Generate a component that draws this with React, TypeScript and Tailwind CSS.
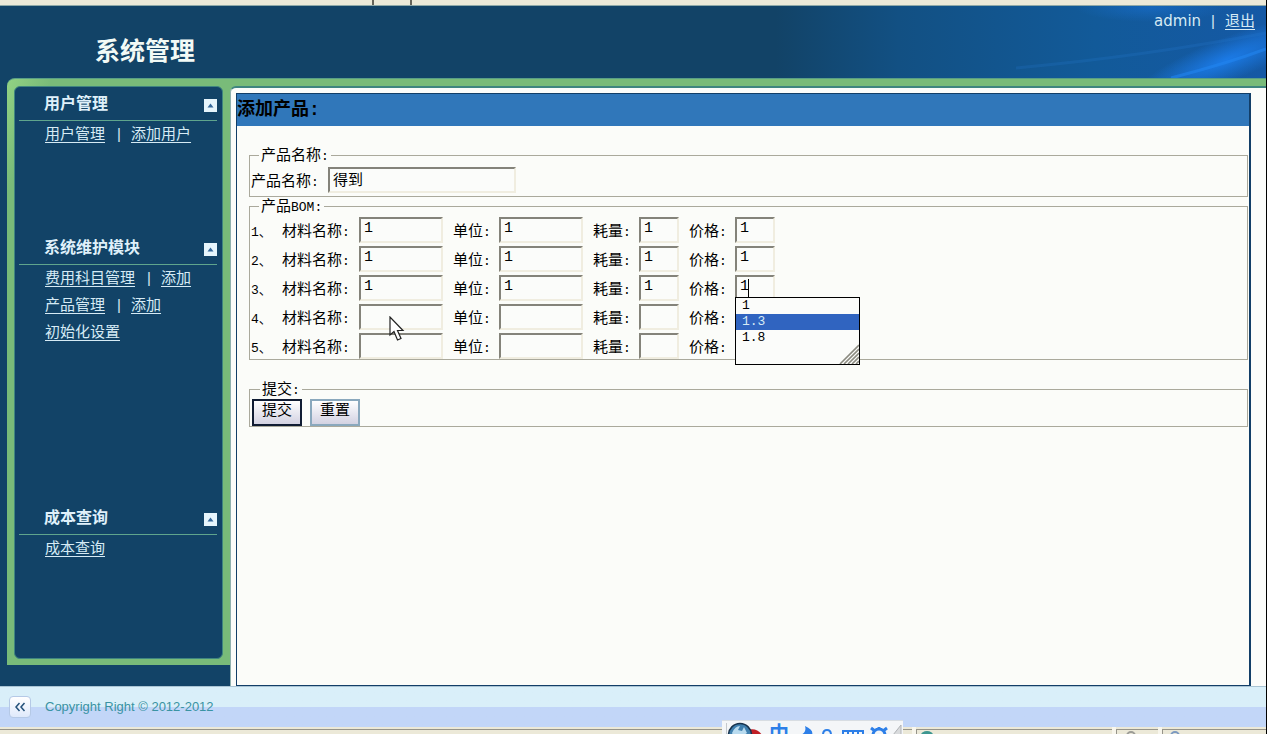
import { useState } from "react";

type MenuLink = { label: string; href: string };

type MenuGroup = {
  title: string;
  height: string;
  rows: MenuLink[][];
};

type BomRow = { material: string; unit: string; usage: string; price: string };

const MENU: MenuGroup[] = [
  {
    title: "用户管理",
    height: "min-h-[144px]",
    rows: [
      [
        { label: "用户管理", href: "#users" },
        { label: "添加用户", href: "#users-add" },
      ],
    ],
  },
  {
    title: "系统维护模块",
    height: "min-h-[270px]",
    rows: [
      [
        { label: "费用科目管理", href: "#subjects" },
        { label: "添加", href: "#subjects-add" },
      ],
      [
        { label: "产品管理", href: "#products" },
        { label: "添加", href: "#products-add" },
      ],
      [{ label: "初始化设置", href: "#init" }],
    ],
  },
  {
    title: "成本查询",
    height: "min-h-[144px]",
    rows: [[{ label: "成本查询", href: "#cost" }]],
  },
];

const COLUMNS: { key: keyof BomRow; label: string; labelWidth: string; width: string }[] = [
  { key: "material", label: "材料名称", labelWidth: "w-[77px]", width: "w-[84px]" },
  { key: "unit", label: "单位", labelWidth: "w-[46px]", width: "w-[84px]" },
  { key: "usage", label: "耗量", labelWidth: "w-[46px]", width: "w-[40px]" },
  { key: "price", label: "价格", labelWidth: "w-[46px]", width: "w-[40px]" },
];

const FILLED: BomRow = { material: "1", unit: "1", usage: "1", price: "1" };
const EMPTY: BomRow = { material: "", unit: "", usage: "", price: "" };

const SUGGESTIONS = ["1", "1.3", "1.8"];

const FIELD =
  "h-[26px] border-2 border-t-[#84837a] border-l-[#84837a] border-r-[#f0ede0] border-b-[#f0ede0] bg-[#fbfcfa] px-[3px] pb-[3px] outline-none";

export default function App() {
  const [name, setName] = useState("得到");
  const [rows, setRows] = useState<BomRow[]>([FILLED, FILLED, FILLED, EMPTY, EMPTY]);
  const [active, setActive] = useState("1.3");

  const updateRow = (index: number, key: keyof BomRow, value: string) => {
    setRows((prev) => prev.map((row, i) => (i === index ? { ...row, [key]: value } : row)));
  };

  const reset = () => {
    setName("");
    setRows([EMPTY, EMPTY, EMPTY, EMPTY, EMPTY]);
  };

  return (
    <div className="relative flex min-h-screen w-full flex-col overflow-hidden border-r border-black bg-[#124367] font-['Liberation_Sans','Noto_Sans_CJK_SC',sans-serif] text-[15px]">
      <ToolStrip />
      <Header />

      <div className="flex flex-1">
        <aside className="flex w-[230px] shrink-0 flex-col pb-[21px] pl-[7px]">
          <div className="flex flex-1 flex-col rounded-tl-lg border-t border-[#5a9f86] bg-[#79bb79] bg-linear-to-br from-[#92d283] to-[#79bb79] to-10% px-[7px] pt-[7px] pb-[6px]">
            <nav className="flex-1 rounded-md border border-[#3f8580] bg-[#124367] pr-[5px] pl-1">
              {MENU.map((group) => (
                <MenuSection key={group.title} group={group} />
              ))}
            </nav>
          </div>
        </aside>

        <main className="flex min-w-0 flex-1 flex-col border-t border-[#5a9f86] bg-[#79bb79] pt-[7px]">
          <div className="flex flex-1 flex-col rounded-tl-md border-t-2 border-l border-t-[#3f8580] border-l-[#8fb0ae] bg-[#fbfcfa] pt-[5px] pr-[15px] pl-[5px]">
            <div className="flex-1 border border-r-2 border-[#123e68] bg-[#fbfcf9] font-['Liberation_Mono','Noto_Sans_CJK_SC',monospace] text-black">
              <h1 className="h-8 bg-[#3077ba] text-lg leading-8 font-bold">添加产品:</h1>

              <form className="pt-5 pr-px pl-3" onSubmit={(e) => e.preventDefault()}>
                <fieldset className="border border-[#aaa99c] pt-[3px] pb-[3px] pl-px">
                  <Legend text="产品名称" />
                  <div className="flex items-end">
                    <label htmlFor="product" className="w-[77px] leading-5">
                      产品名称<Colon />
                    </label>
                    <input
                      id="product"
                      value={name}
                      onChange={(e) => setName(e.target.value)}
                      className={`${FIELD} w-[188px]`}
                    />
                  </div>
                </fieldset>

                <fieldset className="border border-[#aaa99c] pt-[2px] pl-px">
                  <Legend text="产品" latin="BOM" />
                  {rows.map((row, index) => (
                    <div key={index} className="mb-[3px] flex items-end last:mb-0">
                      <span className="w-[31px] text-[13px] leading-5">{index + 1}、</span>
                      {COLUMNS.map((col) => (
                        <div key={col.key} className="relative mr-[10px] flex items-end">
                          <label htmlFor={`${col.key}-${index}`} className={`${col.labelWidth} leading-5`}>
                            {col.label}
                            <Colon />
                          </label>
                          <input
                            id={`${col.key}-${index}`}
                            value={row[col.key]}
                            onChange={(e) => updateRow(index, col.key, e.target.value)}
                            className={`${FIELD} ${col.width}`}
                          />
                          {index === 2 && col.key === "price" ? (
                            <>
                              <span className="absolute top-1 left-[59px] h-[18px] w-px bg-black" />
                              <Suggestions
                                active={active}
                                onPick={(v) => {
                                  setActive(v);
                                  updateRow(index, "price", v);
                                }}
                              />
                            </>
                          ) : null}
                        </div>
                      ))}
                    </div>
                  ))}
                </fieldset>

                <fieldset className="mt-5 border border-[#aaa99c] pt-px pl-[2px]">
                  <Legend text="提交" />
                  <div className="flex gap-2">
                    <button
                      type="submit"
                      className="h-[27px] w-[50px] border-2 border-[#101c33] bg-linear-to-b from-white to-[#d3d2e2]"
                    >
                      提交
                    </button>
                    <button
                      type="button"
                      onClick={reset}
                      className="h-[27px] w-[50px] border-2 border-[#8aa8bd] bg-linear-to-b from-white to-[#d3d2e2]"
                    >
                      重置
                    </button>
                  </div>
                </fieldset>
              </form>
            </div>
          </div>
        </main>
      </div>

      <Footer />
      <Taskbar />
      <Pointer />
    </div>
  );
}

function ToolStrip() {
  return (
    <div className="flex h-[6px] border-b border-[#8fa9a8] bg-[#ece9d8]">
      <div className="w-[374px] border-r-2 border-[#66645a]" />
      <div className="w-[38px] border-r-2 border-[#66645a]" />
    </div>
  );
}

function Header() {
  return (
    <header className="relative flex h-[72px] justify-between overflow-hidden">
      <svg className="absolute top-0 right-0 h-full w-[490px]" viewBox="0 0 490 72" preserveAspectRatio="none" aria-hidden="true">
        <defs>
          <linearGradient id="sky" x1="0" x2="1" y1="0" y2="0">
            <stop offset="0" stopColor="#124367" />
            <stop offset="0.25" stopColor="#125083" />
            <stop offset="0.65" stopColor="#125a99" />
            <stop offset="1" stopColor="#1559a5" />
          </linearGradient>
          <radialGradient id="glow">
            <stop offset="0" stopColor="#1b7ae6" />
            <stop offset="1" stopColor="#1b7ae6" stopOpacity="0" />
          </radialGradient>
        </defs>
        <rect width="490" height="72" fill="url(#sky)" />
        <ellipse cx="450" cy="54" rx="100" ry="22" fill="url(#glow)" transform="rotate(-22 450 54)" />
        <ellipse cx="375" cy="2" rx="75" ry="14" fill="url(#glow)" opacity="0.4" />
        <path d="M240 62Q370 50 490 27" fill="none" stroke="#2a7fd6" strokeWidth="3" opacity="0.2" />
        <path d="M395 72Q450 58 490 43" fill="none" stroke="#2386f2" strokeWidth="3" opacity="0.55" />
      </svg>
      <div className="relative pt-[27px] pl-[95px] text-[25px] leading-9 font-bold text-[#f2faf6]">系统管理</div>
      <div className="relative flex gap-[10px] pt-1 pr-[11px] leading-[22px] text-[#d6ebf5]">
        <span className="font-['DejaVu_Sans',sans-serif]">admin</span>
        <span>|</span>
        <a href="#logout" className="underline underline-offset-3">
          退出
        </a>
      </div>
    </header>
  );
}

function MenuSection({ group }: { group: MenuGroup }) {
  const [open, setOpen] = useState(true);
  return (
    <section className={group.height}>
      <div className="flex h-[34px] items-center justify-between border-b border-[#5fa58d] pt-px pl-[25px] text-base font-bold text-[#dff0fa]">
        <h2>{group.title}</h2>
        <button
          type="button"
          aria-label={group.title}
          onClick={() => setOpen(!open)}
          className="mt-[2px] flex size-[13px] items-center justify-center bg-[#e6f5fc]"
        >
          <svg width="7" height="5" viewBox="0 0 7 5" aria-hidden="true">
            <path d="M3.5 0.5L6.5 4.5H0.5Z" fill="#35689a" />
          </svg>
        </button>
      </div>
      {open ? (
        <ul className="pl-[26px] text-[#d6ebf5]">
          {group.rows.map((row) => (
            <li key={row[0].label} className="flex h-[27px] items-center">
              {row.map((link, i) => (
                <span key={link.label} className="flex">
                  {i > 0 ? <span className="w-[26px] pl-[2px] text-center">|</span> : null}
                  <a href={link.href} className="underline underline-offset-3">
                    {link.label}
                  </a>
                </span>
              ))}
            </li>
          ))}
        </ul>
      ) : null}
    </section>
  );
}

function Colon() {
  return <span className="text-[13px]">:</span>;
}

function Legend({ text, latin }: { text: string; latin?: string }) {
  return (
    <legend className="ml-2 h-[18px] px-[2px] leading-[22px]">
      {text}
      {latin ? <span className="text-[13px]">{latin}</span> : null}
      <Colon />
    </legend>
  );
}

function Suggestions({ active, onPick }: { active: string; onPick: (v: string) => void }) {
  return (
    <ul className="absolute top-[22px] left-[46px] z-10 h-[68px] w-[125px] border border-black bg-[#fbfcfa] text-[13px]">
      {SUGGESTIONS.map((value) => (
        <li key={value}>
          <button
            type="button"
            onClick={() => onPick(value)}
            className={[
              "block h-4 w-full pl-[6px] text-left leading-4",
              value === active ? "bg-[#3064c0] text-[#d6ebf5]" : "",
            ].join(" ")}
          >
            {value}
          </button>
        </li>
      ))}
      <svg className="absolute right-0 bottom-0" width="20" height="20" viewBox="0 0 20 20" aria-hidden="true">
        <path d="M1 20L20 1M5 20L20 5M9 20L20 9M13 20L20 13M17 20L20 17" stroke="#8b8a80" strokeWidth="1.6" />
      </svg>
    </ul>
  );
}

function Footer() {
  return (
    <footer className="flex h-[41px] items-center border-t border-[#a9c4d4] bg-[#c2d6f8] bg-linear-to-b from-[#d9eff9] from-50% to-[#c2d6f8] to-50% pl-[9px]">
      <button
        type="button"
        aria-label="Collapse"
        className="flex size-[22px] items-center justify-center rounded-sm border border-[#b5c9e6] bg-linear-to-b from-white to-[#dfe9fb]"
      >
        <svg width="12" height="10" viewBox="0 0 12 10" fill="none" stroke="#24517a" strokeWidth="1.5" aria-hidden="true">
          <path d="M5.5 1L2 5L5.5 9M10.5 1L7 5L10.5 9" />
        </svg>
      </button>
      <p className="ml-[14px] text-[13px] text-[#3a93a3]">Copyright Right © 2012-2012</p>
    </footer>
  );
}

function Taskbar() {
  return (
    <div className="relative h-[7px] bg-[#ece9d8]">
      <div className="h-[3px] border-b border-[#96948a]" />
      <svg className="absolute bottom-0 left-[902px]" width="365" height="7" viewBox="0 0 365 7" aria-hidden="true">
        <path d="M10 0V7H14V0ZM210 0V7H214V0ZM256 0V7H260V0Z" fill="#f8f6ec" />
        <path d="M14.500 7V2.500H210M214.500 7V2.500H256M260.500 7V2.500H365" fill="none" stroke="#96948a" />
        <ellipse cx="25" cy="8" rx="6" ry="4" fill="#3d9690" />
        <circle cx="229" cy="9" r="4" fill="none" stroke="#9c9c96" strokeWidth="2" />
        <circle cx="273" cy="9" r="4" fill="none" stroke="#7d9ac0" strokeWidth="2" />
      </svg>
      <InputMethodBar />
    </div>
  );
}

function InputMethodBar() {
  return (
    <div className="absolute bottom-0 left-[722px] h-[14px] w-[181px] border-t border-[#d8dde2] bg-[#f4f6f8] font-['Noto_Sans_CJK_SC',sans-serif]">
      <svg className="absolute inset-0" width="181" height="14" viewBox="0 0 181 14" aria-hidden="true">
        <path d="M4.5 2V14" stroke="#c4c8cc" />
        <path d="M25 9Q35 6 40 14H25Z" fill="#c01f26" />
        <circle cx="18" cy="14" r="11.500" fill="#3f7fae" stroke="#17324c" strokeWidth="1.5" />
        <path d="M10 12Q13 5 18 5L16 9L20 10L22 6L25 12L22 14H11Z" fill="#b9dbef" />
        <path d="M83 5Q92 9 90 14H78Q85 12 83 5Z" fill="#2d7fe8" />
        <path d="M101 14Q101 9 105 9Q109 9 109 14" fill="none" stroke="#2d7fe8" strokeWidth="2" />
        <path d="M121 14V10H141V14M126 11V14M131 11V14M136 11V14" fill="none" stroke="#2d7fe8" strokeWidth="2" />
        <path d="M151 14A6 6 0 0 1 163 14M157 6V9M149 7L153 10M165 7L161 10" fill="none" stroke="#2d7fe8" strokeWidth="3" />
        <path d="M171 14L179 4V14Z" fill="#d9dbdd" stroke="#b0b2b5" />
      </svg>
      <span className="absolute top-[2px] left-[47px] text-xl leading-5 font-bold text-[#2d7fe8]">中</span>
    </div>
  );
}

function Pointer() {
  return (
    <svg className="pointer-events-none absolute top-[316px] left-[389px]" width="16" height="26" viewBox="0 0 16 26" aria-hidden="true">
      <path
        d="M1 1V19L5 15.500L8.500 24L12 22.500L8.500 14.500H14Z"
        fill="#fff"
        stroke="#222"
        strokeWidth="1.200"
      />
    </svg>
  );
}
